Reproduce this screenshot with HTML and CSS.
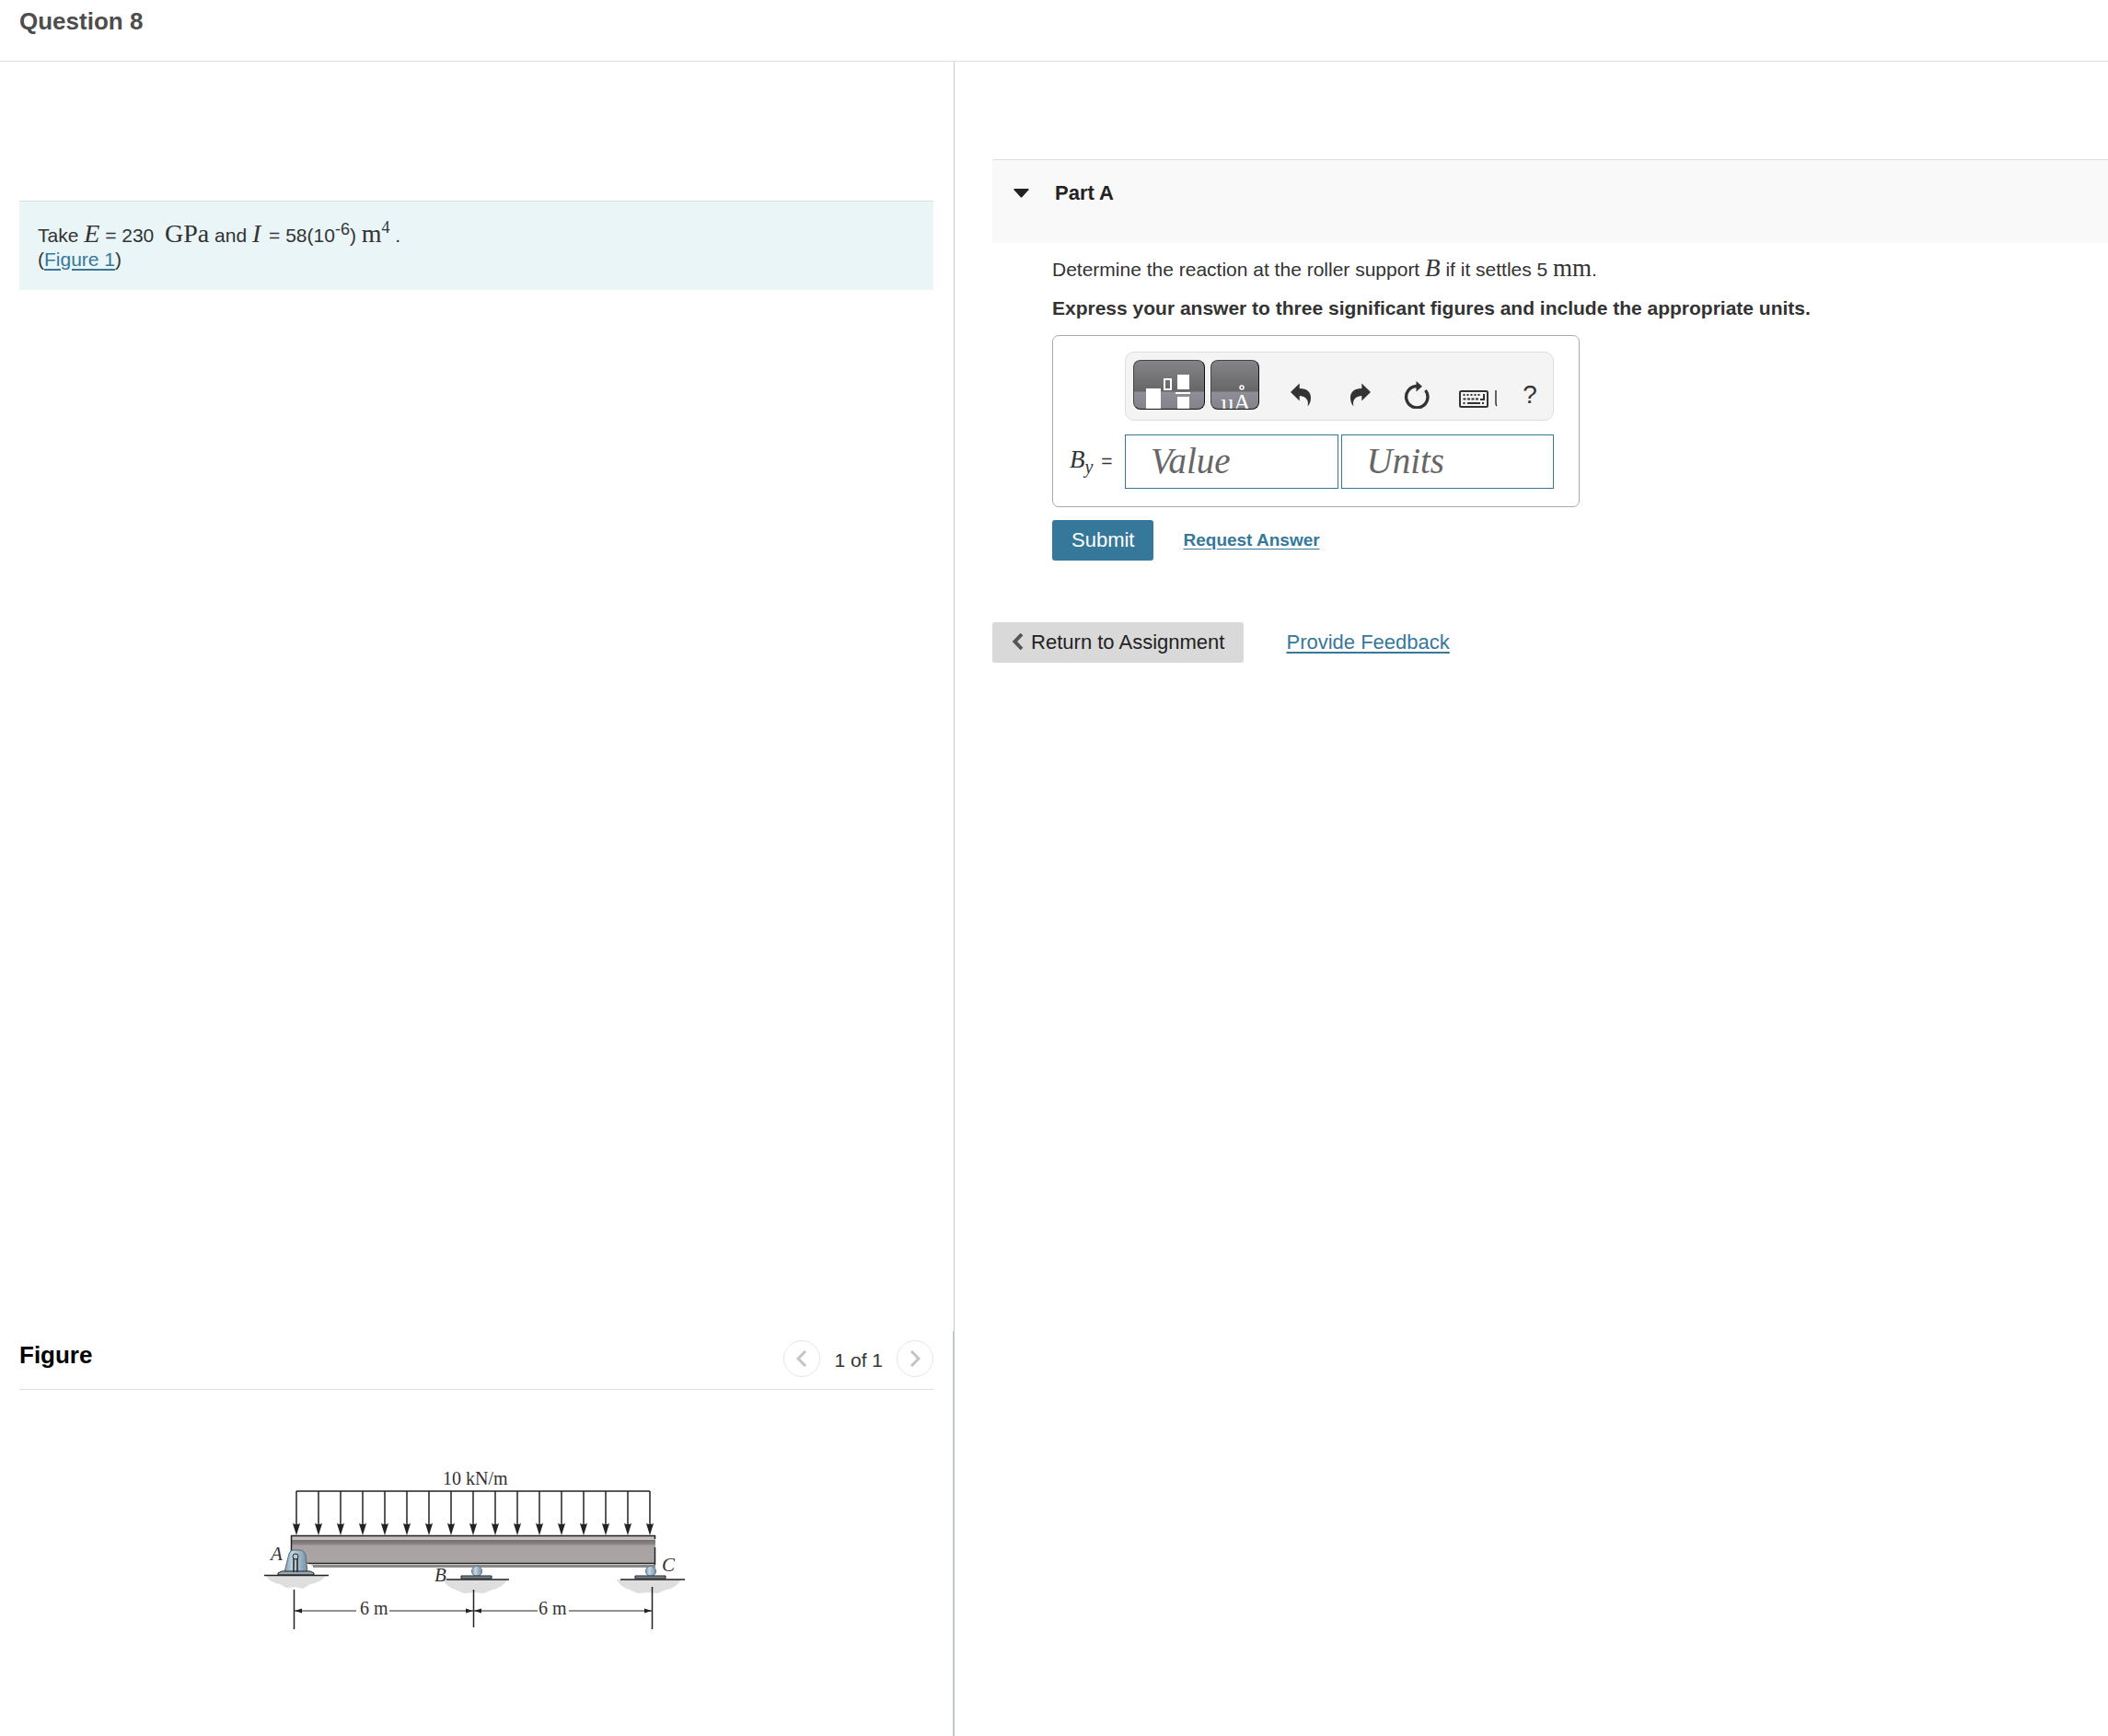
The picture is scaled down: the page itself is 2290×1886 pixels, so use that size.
FILE: index.html
```
<!DOCTYPE html>
<html lang="en">
<head>
    <meta charset="UTF-8">
    <meta name="viewport" content="width=device-width, initial-scale=1.0">
    <title>Question 8</title>
    <link rel="stylesheet" href="styles.css">
</head>
<body>
    <header class="page-header">
        <h1>Question 8</h1>
    </header>

    <main class="layout">
        <div class="left">
            <section class="problem">
                <div class="problem-text">
                    Take <i class="math">E</i> = 230&nbsp; <span class="math">GPa</span> and <i class="math var">I</i> = 58(10<sup>-6</sup>) <span class="math">m<sup>4</sup></span> .<br>
                    (<a href="#figure">Figure 1</a>)
                </div>
            </section>

            <section class="figure-pane" id="figure">
                <div class="figure-header">
                    <h2>Figure</h2>
                    <div class="pager">
                        <button type="button" class="pager-btn" aria-label="Previous figure">
                            <svg width="12" height="18" viewBox="0 0 12 18"><path d="M10 1L2 9l8 8"/></svg>
                        </button>
                        <span>1 of 1</span>
                        <button type="button" class="pager-btn" aria-label="Next figure">
                            <svg width="12" height="18" viewBox="0 0 12 18"><path d="M2 1l8 8-8 8"/></svg>
                        </button>
                    </div>
                </div>

                <svg class="beam" width="464" height="190" viewBox="286 1590 464 190" role="img" aria-label="Beam ABC with a distributed load">
                    <defs>
                        <linearGradient id="steel" x1="0" x2="1" y1="0" y2="0">
                            <stop offset="0" stop-color="#7f99ab"/>
                            <stop offset=".35" stop-color="#c3d6e2"/>
                            <stop offset="1" stop-color="#7590a5"/>
                        </linearGradient>
                        <linearGradient id="web" x1="0" x2="0" y1="0" y2="1">
                            <stop offset="0" stop-color="#777070"/>
                            <stop offset=".15" stop-color="#857f7e"/>
                            <stop offset=".25" stop-color="#a8a3a2"/>
                            <stop offset="1" stop-color="#aaa5a4"/>
                        </linearGradient>
                        <g id="arrow">
                            <path d="M0 0v38" stroke="#222" stroke-width="1.5"/>
                            <path d="M-4 35q4 2 8 0L0 48z" fill="#222"/>
                        </g>
                        <g id="roller">
                            <path d="M-33 15h66q-5 9-16 11l-10 4-9-1-12 1-9-4q-9-2-14-11z" fill="#dedede"/>
                            <circle cx="0" cy="6" r="5.5" fill="url(#steel)" stroke="#5f7b91"/>
                            <path d="M-17 11h33v3h-33z" fill="#7c8b95" stroke="#222"/>
                        </g>
                    </defs>

                    <!-- distributed load -->
                    <text x="481" y="1614">10 kN/m</text>
                    <path d="M322 1621h384" stroke="#222" stroke-width="1.5"/>
                    <use href="#arrow" x="322" y="1621"/>
                    <use href="#arrow" x="346" y="1621"/>
                    <use href="#arrow" x="370" y="1621"/>
                    <use href="#arrow" x="394" y="1621"/>
                    <use href="#arrow" x="418" y="1621"/>
                    <use href="#arrow" x="442" y="1621"/>
                    <use href="#arrow" x="466" y="1621"/>
                    <use href="#arrow" x="490" y="1621"/>
                    <use href="#arrow" x="514" y="1621"/>
                    <use href="#arrow" x="538" y="1621"/>
                    <use href="#arrow" x="562" y="1621"/>
                    <use href="#arrow" x="586" y="1621"/>
                    <use href="#arrow" x="610" y="1621"/>
                    <use href="#arrow" x="634" y="1621"/>
                    <use href="#arrow" x="658" y="1621"/>
                    <use href="#arrow" x="682" y="1621"/>
                    <use href="#arrow" x="706" y="1621"/>

                    <!-- beam -->
                    <path d="M316 1670h396v4H316z" fill="#c5bebe"/>
                    <path d="M316 1674h396v26H316z" fill="url(#web)"/>
                    <path d="M338 1701h374v3H338z" fill="#8b8887"/>
                    <path d="M316 1669.500h396M333 1699.500h379" stroke="#222" stroke-width="1.500"/>
                    <path d="M316.500 1669v17M711.500 1669v4M711.500 1682v19" stroke="#222" stroke-width="1.500"/>

                    <!-- pin at A -->
                    <path d="M289 1713h65q-7 8-17 9l-8 5-8-2-10 1-7-4q-10-1-15-9z" fill="#dedede"/>
                    <path d="M332 1699l8 3v6h-6z" fill="#fff"/>
                    <path d="M309 1709l5-20q1-4 5-4h6q6 0 7 6l2 18z" fill="url(#steel)" stroke="#52697a"/>
                    <path d="M302 1712v-2l4-2h31l4 2v2z" fill="#94a8b5" stroke="#222"/>
                    <path d="M319 1709v-17M323 1709v-17" stroke="#222" stroke-width="1.5"/>
                    <circle cx="321" cy="1692" r="3" fill="#b9cbd7" stroke="#222"/>
                    <path d="M287 1712.500h70" stroke="#222" stroke-width="1.500"/>

                    <!-- rollers at B and C -->
                    <use href="#roller" x="518" y="1702"/>
                    <use href="#roller" x="707" y="1702"/>
                    <path d="M485 1717h68M674 1717h70" stroke="#222" stroke-width="1.500"/>
                    <text class="point" x="294" y="1696">A</text>
                    <text class="point" x="472" y="1719">B</text>
                    <text class="point" x="719" y="1708">C</text>

                    <!-- dimensions -->
                    <path d="M319.500 1728v43M514.500 1728v41M708.500 1725v46" stroke="#222" stroke-width="1.500"/>
                    <path d="M320 1751h67M423 1751h91M515 1751h69M618 1751h90" stroke="#222"/>
                    <path d="M320 1751l8-2.500v5zM514 1751l-8-2.500v5zM515 1751l8-2.500v5zM708 1751l-8-2.500v5z" fill="#222"/>
                    <text x="391" y="1755">6 m</text>
                    <text x="585" y="1755">6 m</text>
                </svg>
            </section>
        </div>

        <div class="right">
            <div class="part-header">
                <svg width="17" height="10" viewBox="0 0 17 10"><path d="M1 0h15q1 .5 .5 1.200L9.500 9q-1 1-2 0L.5 1.200Q0 .5 1 0z" fill="#222"/></svg>
                <h2>Part A</h2>
            </div>

            <div class="part-body">
                <p>Determine the reaction at the roller support <i class="math">B</i> if it settles 5 <span class="math">mm</span>.</p>
                <p><strong>Express your answer to three significant figures and include the appropriate units.</strong></p>

                <div class="answer-box">
                    <div class="toolbar">
                        <button type="button" class="tool tool-wide" aria-label="Templates">
                            <svg width="76" height="52" viewBox="0 0 76 52">
                                <path d="M13 30h16v22H13zM47 15h13v16H47zM47 39h13v13H47zM45 34h16v2H45z" fill="#fff"/>
                                <path d="M33 20h7v11h-7z" fill="none" stroke="#fff" stroke-width="2"/>
                            </svg>
                        </button>
                        <button type="button" class="tool" aria-label="Symbols">
                            <svg width="51" height="52" viewBox="0 0 51 52">
                                <text x="10" y="54">µ</text>
                                <text x="24" y="54">A</text>
                                <circle cx="33" cy="29" r="2" fill="none" stroke="#fff" stroke-width="1.500"/>
                            </svg>
                        </button>
                        <button type="button" class="icon undo" aria-label="Undo">
                            <svg width="22" height="30" viewBox="0 0 22 30"><path d="M0 12l9.700-9.500v5.500C18 8 22 12 22 18c0 4-1 7-3.500 9.500C20 22 18 16.500 9.700 16v5.500z" fill="#333"/></svg>
                        </button>
                        <button type="button" class="icon redo" aria-label="Redo">
                            <svg width="22" height="30" viewBox="0 0 22 30"><path d="M22 12l-9.700-9.500v5.500C4 8 0 12 0 18c0 4 1 7 3.500 9.500C2 22 4 16.500 12.300 16v5.500z" fill="#333"/></svg>
                        </button>
                        <button type="button" class="icon reset" aria-label="Reset">
                            <svg width="28" height="30" viewBox="0 0 28 30">
                                <path d="M14 5.500A11.700 11.700 0 1 0 23.500 10" fill="none" stroke="#333" stroke-width="3.400"/>
                                <path d="M13.500 0l6.500 5.700-6.500 5.800z" fill="#333"/>
                            </svg>
                        </button>
                        <button type="button" class="icon keys" aria-label="Keyboard shortcuts">
                            <svg width="42" height="30" viewBox="0 0 42 30">
                                <rect x="1" y="11" width="30" height="17" rx="1.500" fill="none" stroke="#333" stroke-width="2"/>
                                <path d="M4.500 15h20" stroke="#333" stroke-width="2" stroke-dasharray="2 2"/>
                                <path d="M4.500 19.500h18" stroke="#333" stroke-width="2" stroke-dasharray="3 1.500"/>
                                <path d="M27 14v6h-4M4.500 24h2M9 24h14M25 24h2" fill="none" stroke="#333" stroke-width="2"/>
                                <path d="M40 10v14q0 2 1 3" fill="none" stroke="#333" stroke-width="1.500"/>
                            </svg>
                        </button>
                        <button type="button" class="icon help" aria-label="Help">?</button>
                    </div>
                    <label for="value" class="answer-label"><i>B<sub>y</sub></i> =</label>
                    <div class="fields">
                        <input type="text" id="value" placeholder="Value">
                        <input type="text" id="units" placeholder="Units" aria-label="Units">
                    </div>
                </div>

                <div class="submit-row">
                    <button type="button" class="btn btn-primary">Submit</button>
                    <a href="#" class="request">Request Answer</a>
                </div>
            </div>

            <div class="bottom-row">
                <button type="button" class="btn">
                    <svg width="13" height="20" viewBox="0 0 13 20"><path d="M11 2L3.500 10l7.500 8" fill="none" stroke="#555" stroke-width="4"/></svg>
                    Return to Assignment
                </button>
                <a href="#">Provide Feedback</a>
            </div>
        </div>
    </main>
</body>
</html>
```
FILE: styles.css
```
* {
    box-sizing: border-box;
}

body {
    margin: 0;
    min-height: 100vh;
    display: flex;
    flex-direction: column;
    background: #fff;
    color: #333;
    font-family: "Liberation Sans", Arial, sans-serif;
    font-size: 21px;
    line-height: 26px;
}

h1,
h2,
p {
    margin: 0;
}

a {
    color: #36789a;
    text-underline-offset: 3px;
}

button {
    font-family: inherit;
    cursor: pointer;
}

.page-header {
    height: 67px;
    padding: 8px 21px;
    border-bottom: 1px solid #ddd;
}

.page-header h1 {
    color: #4d4d4d;
    font-size: 26px;
    line-height: 30px;
}

.layout {
    flex: 1;
    display: grid;
    grid-template-columns: 1037fr 1253fr;
}

/* left column */
.left {
    display: flex;
    flex-direction: column;
}

.problem {
    flex: 1;
    padding: 151px 22px 0 21px;
    border-right: 1px solid #c5cdd6;
}

.problem-text {
    padding: 24px 20px 20px;
    background: #eaf5f8;
    border-top: 1px solid #d8dfe1;
}

.math {
    font-family: "Liberation Serif", "Times New Roman", serif;
    font-size: 27px;
    line-height: 0;
}

.problem-text .math {
    font-size: 28px;
}

.var {
    padding-right: 3px;
}

sup,
sub {
    line-height: 0;
}

.problem-text sup {
    font-size: 18px;
}

.figure-pane {
    height: 440px;
    padding: 0 21px;
    border-right: 2px solid #b9c9da;
}

.figure-header {
    display: flex;
    align-items: center;
    justify-content: space-between;
    height: 64px;
    border-bottom: 1px solid #ddd;
}

.figure-header h2 {
    padding-bottom: 12px;
    color: #000;
    font-size: 26px;
    line-height: 30px;
}

.pager {
    display: flex;
    align-items: center;
    gap: 15px;
    padding-bottom: 4px;
}

.pager span {
    padding-top: 4px;
}

.pager-btn {
    display: flex;
    align-items: center;
    justify-content: center;
    width: 40px;
    height: 40px;
    padding: 0;
    border: 1px solid #e6e6e6;
    border-radius: 50%;
    background: #fff;
}

.pager-btn path {
    fill: none;
    stroke: #c4c4c4;
    stroke-width: 3;
}

.beam {
    display: block;
    margin: 79px auto 0;
}

.beam text {
    fill: #333;
    font-family: "Liberation Serif", "Times New Roman", serif;
    font-size: 20px;
}

.beam .point {
    font-style: italic;
    font-size: 21px;
}

/* right column */
.right {
    padding: 106px 0 0 41px;
}

.part-header {
    display: flex;
    align-items: flex-start;
    gap: 28px;
    height: 91px;
    padding: 23px;
    background: #f9f9f9;
    border-top: 1px solid #ddd;
}

.part-header svg {
    margin-top: 8px;
}

.part-header h2 {
    color: #222;
    font-size: 22px;
    line-height: 26px;
}

.part-body {
    padding: 16px 65px 0;
}

.part-body p {
    margin-bottom: 16px;
}

.answer-box {
    display: inline-grid;
    grid-template-columns: 60px 466px;
    row-gap: 15px;
    padding: 17px 27px 19px 18px;
    border: 1px solid #aaa;
    border-radius: 7px;
}

.toolbar {
    grid-column: 2;
    display: flex;
    height: 75px;
    padding: 8px 0 8px 8px;
    background: #f4f4f4;
    border: 1px solid #ddd;
    border-radius: 10px;
}

.tool {
    flex: none;
    width: 53px;
    height: 54px;
    margin-right: 6px;
    padding: 0;
    overflow: hidden;
    border: 1px solid #111;
    border-top-color: #444;
    border-left-color: #444;
    border-radius: 8px;
    background: linear-gradient(#858489 0, #666 64%, #908f99 65%, #838289 100%);
}

.tool-wide {
    width: 78px;
}

.tool svg {
    display: block;
}

.tool text {
    fill: #fff;
    font-family: "Liberation Serif", serif;
    font-size: 26px;
}

.icon {
    display: flex;
    flex: none;
    justify-content: center;
    height: 54px;
    padding: 23px 0 0;
    border: 0;
    background: none;
}

.icon svg {
    flex: none;
}

.undo {
    width: 78px;
}

.redo {
    width: 52px;
}

.reset {
    width: 70px;
}

.keys {
    width: 64px;
}

.help {
    width: 48px;
    color: #333;
    font-size: 28px;
    line-height: 30px;
}

.answer-label {
    padding-top: 14px;
}

.answer-label i {
    margin-right: 3px;
    font-family: "Liberation Serif", "Times New Roman", serif;
    font-size: 27px;
}

.answer-label sub {
    font-size: 20px;
}

.fields {
    display: flex;
    gap: 3px;
}

.fields input {
    flex: 1;
    min-width: 0;
    height: 59px;
    padding: 0 27px 2px;
    border: 1px solid #36789a;
    font-family: "Liberation Serif", "Times New Roman", serif;
    font-size: 39px;
    font-style: italic;
}

.fields input::placeholder {
    color: #666;
}

.submit-row {
    display: flex;
    align-items: center;
    gap: 32px;
    margin-top: 14px;
}

.btn {
    height: 44px;
    padding: 0 21px;
    border: 0;
    border-radius: 3px;
    background: #d9d9d9;
    color: #222;
    font-size: 22px;
}

.btn svg {
    margin: 0 2px -2px 0;
}

.btn-primary {
    background: #36789a;
    color: #fff;
}

.request {
    font-size: 19px;
    font-weight: bold;
}

.bottom-row {
    display: flex;
    align-items: center;
    gap: 46px;
    margin-top: 67px;
    font-size: 22px;
}
```
